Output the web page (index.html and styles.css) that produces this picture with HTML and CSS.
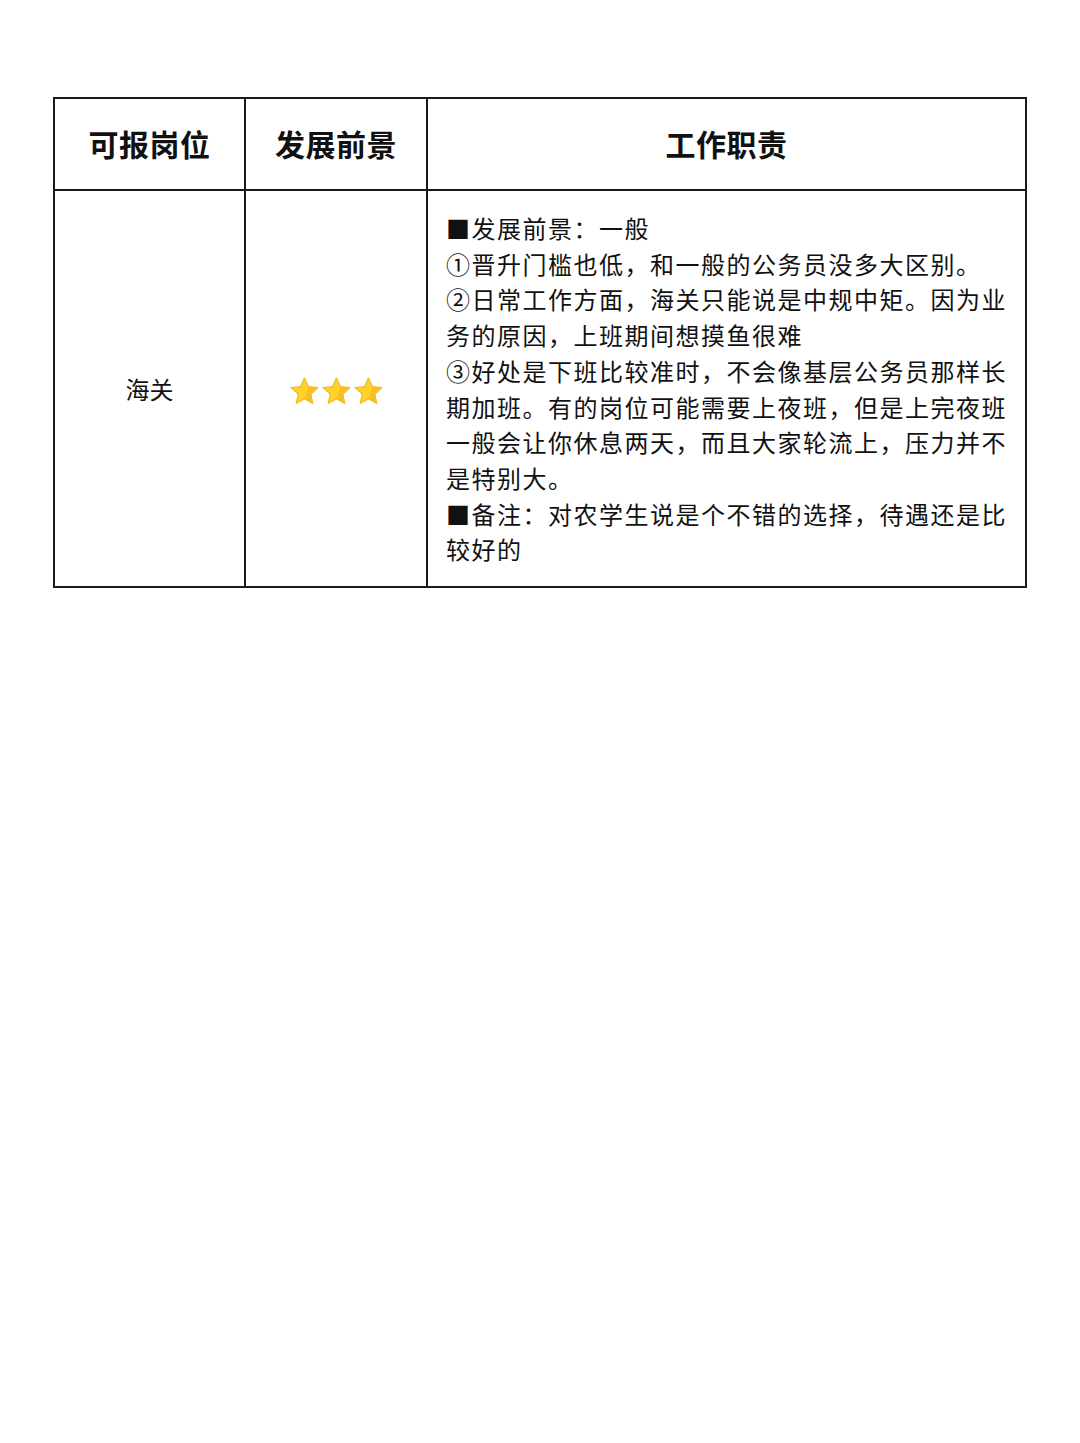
FILE: index.html
```html
<!DOCTYPE html>
<html lang="zh">
<head>
<meta charset="utf-8">
<link rel="stylesheet" href="styles.css">
</head>
<body>
<div class="page">
  <table class="grid">
    <colgroup>
      <col class="c1"><col class="c2"><col class="c3">
    </colgroup>
    <thead>
      <tr>
        <th>可报岗位</th>
        <th>发展前景</th>
        <th>工作职责</th>
      </tr>
    </thead>
    <tbody>
      <tr>
        <td class="center">海关</td>
        <td class="center">
          <span class="stars">
            <svg class="star" viewBox="0 0 24 24"><path d="M12 1.5l3.1 6.7 7.3.8-5.5 5 1.6 7.3L12 17.6l-6.5 3.7 1.6-7.3-5.5-5 7.3-.8z" fill="#FFD02E" stroke="#F2B81E" stroke-width="0.8" stroke-linejoin="round"/><path d="M12 17.6l6.5 3.7-1.6-7.3 5.5-5-7.3-.8z" fill="#F4BC1F" opacity="0.7"/></svg>
            <svg class="star" viewBox="0 0 24 24"><path d="M12 1.5l3.1 6.7 7.3.8-5.5 5 1.6 7.3L12 17.6l-6.5 3.7 1.6-7.3-5.5-5 7.3-.8z" fill="#FFD02E" stroke="#F2B81E" stroke-width="0.8" stroke-linejoin="round"/><path d="M12 17.6l6.5 3.7-1.6-7.3 5.5-5-7.3-.8z" fill="#F4BC1F" opacity="0.7"/></svg>
            <svg class="star" viewBox="0 0 24 24"><path d="M12 1.5l3.1 6.7 7.3.8-5.5 5 1.6 7.3L12 17.6l-6.5 3.7 1.6-7.3-5.5-5 7.3-.8z" fill="#FFD02E" stroke="#F2B81E" stroke-width="0.8" stroke-linejoin="round"/><path d="M12 17.6l6.5 3.7-1.6-7.3 5.5-5-7.3-.8z" fill="#F4BC1F" opacity="0.7"/></svg>
          </span>
        </td>
        <td class="desc">■发展前景：一般<br>①晋升门槛也低，和一般的公务员没多大区别。<br>②日常工作方面，海关只能说是中规中矩。因为业务的原因，上班期间想摸鱼很难<br>③好处是下班比较准时，不会像基层公务员那样长期加班。有的岗位可能需要上夜班，但是上完夜班一般会让你休息两天，而且大家轮流上，压力并不是特别大。<br>■备注：对农学生说是个不错的选择，待遇还是比较好的</td>
      </tr>
    </tbody>
  </table>
</div>
</body>
</html>
```

FILE: styles.css
```css
html, body {
  margin: 0;
  padding: 0;
  background: #ffffff;
}

body {
  font-family: "Noto Sans CJK SC", "Noto Sans", sans-serif;
  color: #111111;
}

.page {
  padding: 97px 0 0 53px;
}

.grid {
  border-collapse: collapse;
  width: 972px;
  table-layout: fixed;
}

.c1 { width: 191px; }
.c2 { width: 182px; }
.c3 { width: 599px; }

.grid th,
.grid td {
  border: 2px solid #1a1a1a;
  padding: 0;
}

.grid th {
  height: 88px;
  font-size: 30px;
  font-weight: 700;
  text-align: center;
  vertical-align: middle;
  letter-spacing: 0.5px;
  padding-bottom: 2px;
}

.center {
  text-align: center;
  vertical-align: middle;
  font-size: 24px;
}

.stars {
  display: inline-flex;
  gap: 1px;
  vertical-align: middle;
  margin-top: -2px;
}

.star {
  width: 31px;
  height: 31px;
  display: block;
}

.desc {
  font-size: 24px;
  line-height: 35.7px;
  letter-spacing: 1.5px;
  padding: 19px 12px 19px 18px !important;
  vertical-align: top;
  text-align: left;
}
```
